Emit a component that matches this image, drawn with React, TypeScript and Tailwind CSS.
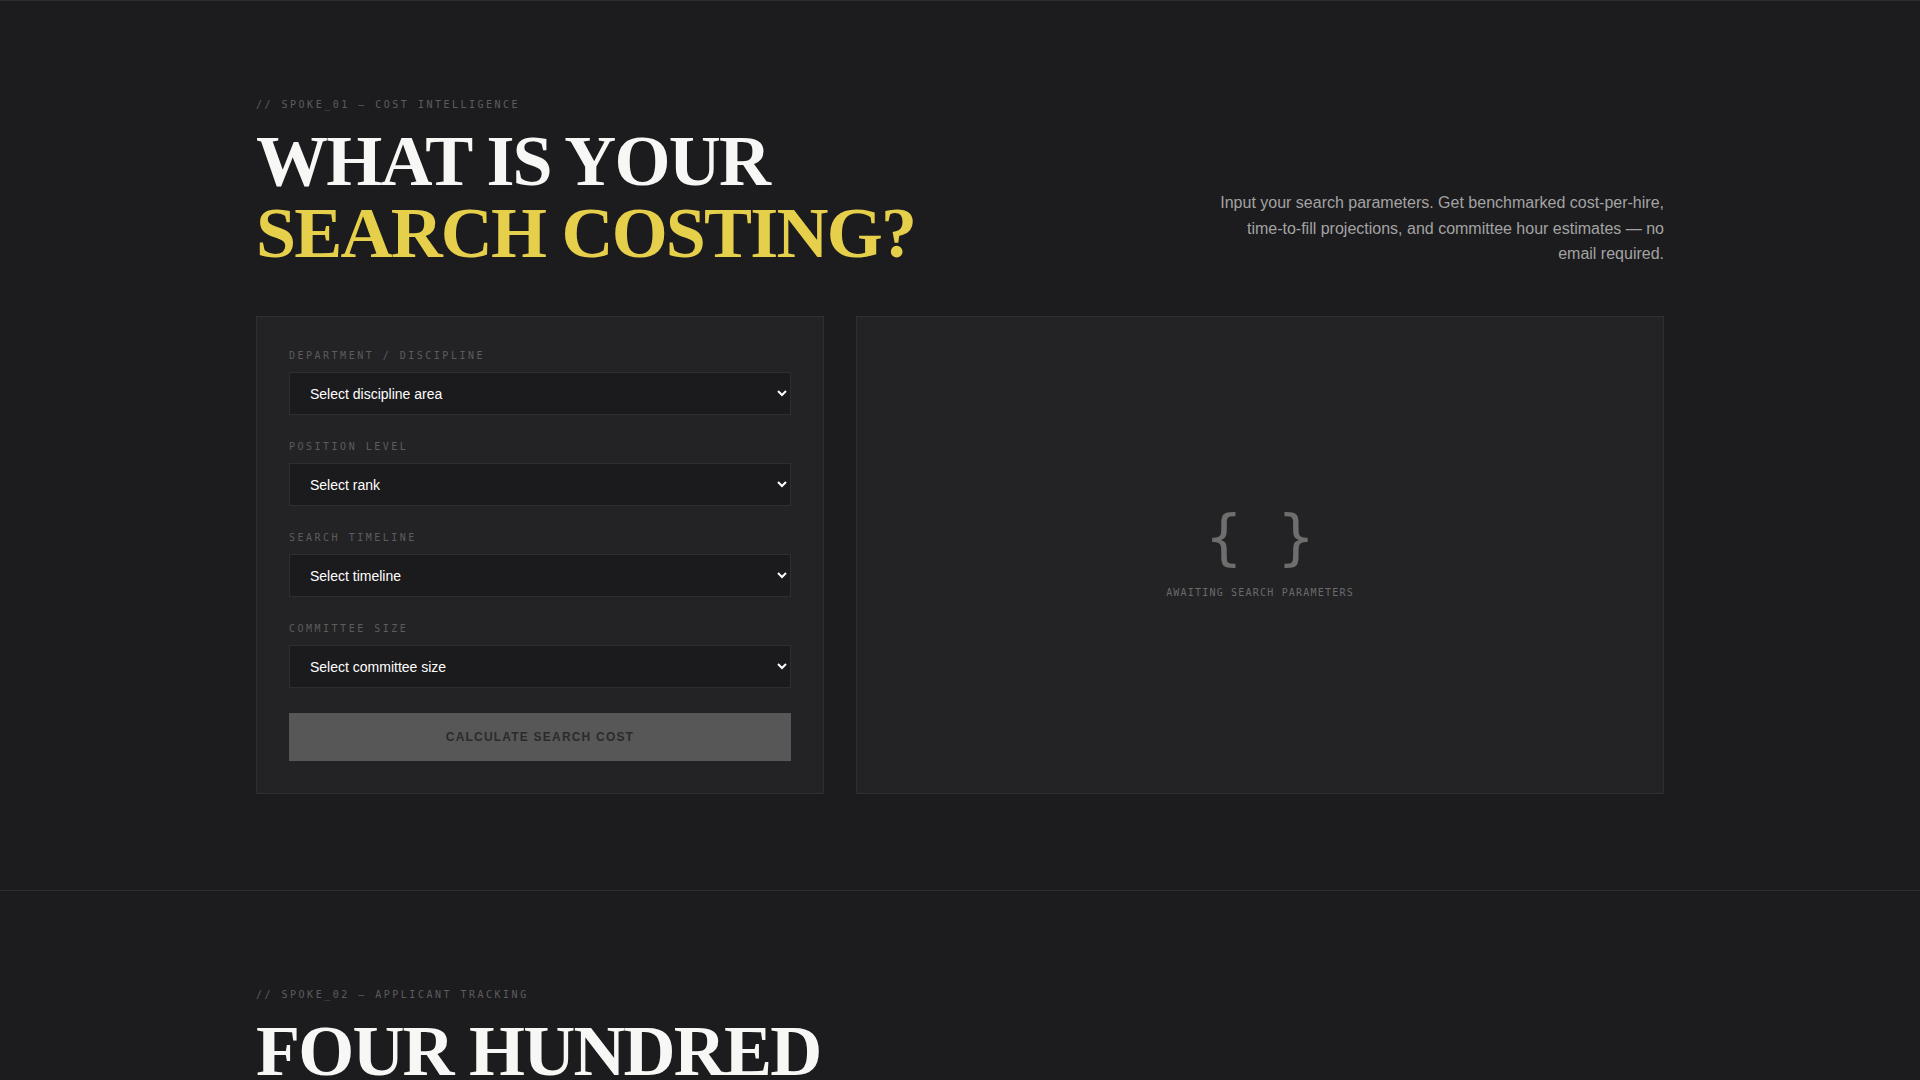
import React from "react";

function Field({ label, placeholder }: { label: string; placeholder: string }) {
  return (
    <div className="flex flex-col">
      <label className="block text-[10px] leading-[13px] mb-[10px] tracking-[0.25em] uppercase text-[#5c5c5e] font-['DejaVu_Sans_Mono',monospace]">
        {label}
      </label>
      <select
        defaultValue=""
        className="h-[43px] w-full pl-4 pr-1 bg-[#1b1b1d] border border-[#2e2e30] text-white text-sm font-['Liberation_Sans',Arial,sans-serif] outline-none"
      >
        <option value="" disabled>
          {placeholder}
        </option>
      </select>
    </div>
  );
}

export default function App() {
  return (
    <div className="min-h-screen bg-[#1c1c1e] font-['Liberation_Sans',Arial,sans-serif]">
      <section className="border-t border-[#2e2e30] pt-24 pb-24">
        <div className="max-w-[1408px] mx-auto">
          <div className="flex justify-between items-end">
            <div>
              <div className="text-[10px] leading-[16px] mb-3 tracking-[0.25em] uppercase text-[#5c5c5e] font-['DejaVu_Sans_Mono',monospace]">
                // SPOKE_01 — COST INTELLIGENCE
              </div>
              <h1 className="font-['Liberation_Serif','Times_New_Roman',serif] font-bold text-[72px] leading-none tracking-[-0.025em] text-[#f7f7f5]">
                WHAT IS YOUR
                <br />
                <span className="text-[#e6cf4a]">SEARCH COSTING?</span>
              </h1>
            </div>
            <p className="max-w-md text-right text-base leading-[1.6] text-[#a3a3a3] mb-[2px]">
              Input your search parameters. Get benchmarked cost-per-hire, time-to-fill projections, and committee hour
              estimates — no email required.
            </p>
          </div>

          <div className="mt-[47px] grid grid-cols-[568px_1fr] gap-8">
            <div className="bg-[#232325] border border-[#2f2f31] p-8 flex flex-col gap-[25px]">
              <Field label="Department / Discipline" placeholder="Select discipline area" />
              <Field label="Position Level" placeholder="Select rank" />
              <Field label="Search Timeline" placeholder="Select timeline" />
              <Field label="Committee Size" placeholder="Select committee size" />
              <button className="h-12 w-full bg-[#575757] text-[#2b2b2b] text-xs font-bold tracking-[0.1em] uppercase">
                Calculate Search Cost
              </button>
            </div>
            <div className="bg-[#232325] border border-[#2f2f31] flex flex-col items-center justify-center pb-1">
              <div className="text-[60px] leading-none text-[#6e6e6e] font-['DejaVu_Sans_Mono',monospace]">{"{ }"}</div>
              <div className="mt-[18px] text-[10px] leading-[15px] tracking-[0.12em] uppercase text-[#6a6a6a] font-['DejaVu_Sans_Mono',monospace]">
                Awaiting search parameters
              </div>
            </div>
          </div>
        </div>
      </section>

      <section className="border-t border-[#2e2e30] pt-24 pb-24">
        <div className="max-w-[1408px] mx-auto">
          <div className="text-[10px] leading-[16px] mb-3 tracking-[0.25em] uppercase text-[#5c5c5e] font-['DejaVu_Sans_Mono',monospace]">
            // SPOKE_02 — APPLICANT TRACKING
          </div>
          <h2 className="font-['Liberation_Serif','Times_New_Roman',serif] font-bold text-[72px] leading-none tracking-[-0.025em] text-[#f7f7f5]">
            FOUR HUNDRED
            <br />
            <span className="text-[#e6cf4a]">APPLICANTS.</span>
          </h2>
        </div>
      </section>
    </div>
  );
}
